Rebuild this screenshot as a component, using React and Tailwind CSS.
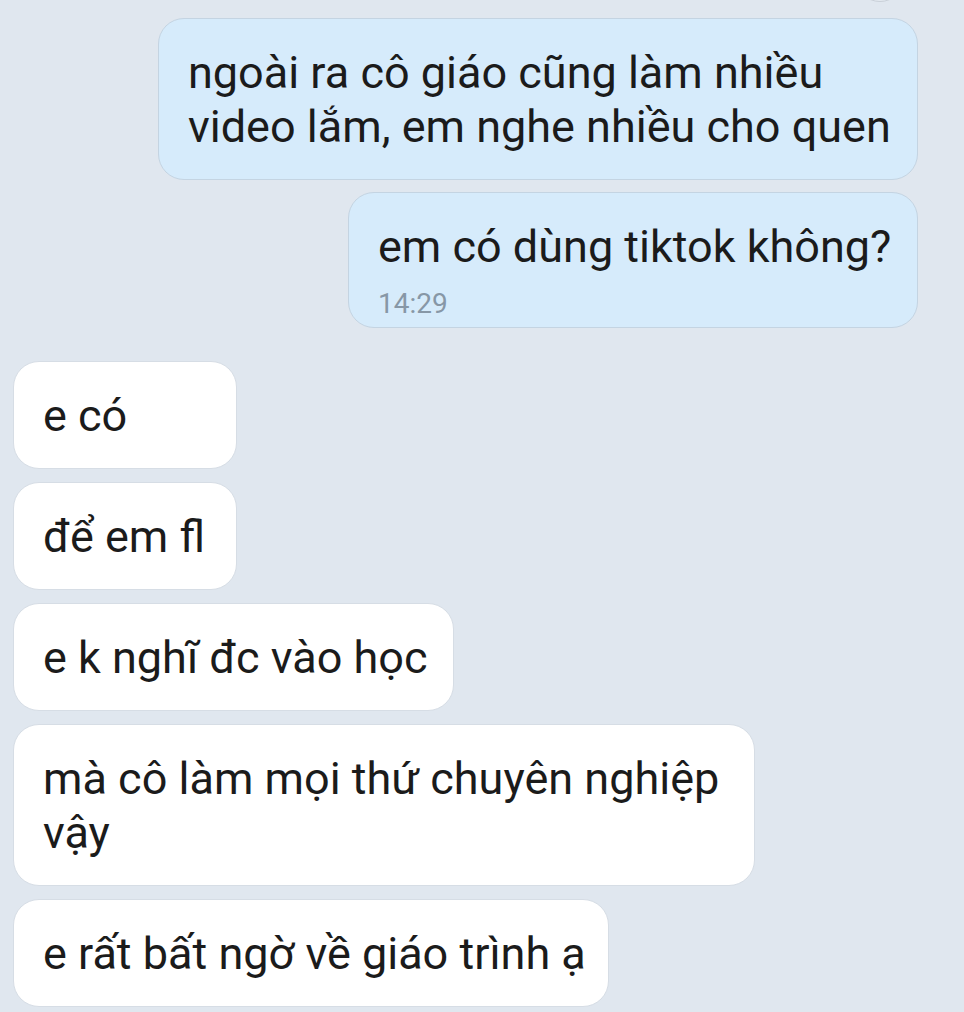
import React from "react";

const messages = [
  { side: "right", width: "w-[760px]", lines: ["ngoài ra cô giáo cũng làm nhiều", "video lắm, em nghe nhiều cho quen"] },
  { side: "right", width: "w-[570px]", lines: ["em có dùng tiktok không?"], time: "14:29" },
  { side: "left", width: "w-[224px]", lines: ["e có"] },
  { side: "left", width: "w-[224px]", lines: ["để em fl"] },
  { side: "left", width: "w-[441px]", lines: ["e k nghĩ đc vào học"] },
  { side: "left", width: "w-[742px]", lines: ["mà cô làm mọi thứ chuyên nghiệp", "vậy"] },
  { side: "left", width: "w-[596px]", lines: ["e rất bất ngờ về giáo trình ạ"] },
];

const Bubble = ({ msg }) => {
  const mine = msg.side === "right";
  return (
    <div
      className={`${msg.width} rounded-[26px] border px-[29px] pt-[27px] ${
        msg.time ? "pb-[8px]" : "pb-[25px]"
      } ${mine ? "bg-[#d6ebfb] border-[#c4d4e2]" : "bg-white border-[#d6dde5]"}`}
    >
      {msg.lines.map((line, i) => (
        <div key={i} className="whitespace-nowrap text-[45px] leading-[54px] text-[#1b1b1b]">
          {line}
        </div>
      ))}
      {msg.time && (
        <div className="mt-[15px] text-[28px] leading-[30px] text-[#8797a6]">{msg.time}</div>
      )}
    </div>
  );
};

export default function App() {
  return (
    <div
      className="relative min-h-[1012px] w-full overflow-hidden bg-[#e0e7ef]"
      style={{ fontFamily: "Roboto, 'Noto Sans', sans-serif" }}
    >
      {/* edge of an avatar/button cut off at the top */}
      <div className="absolute left-[855px] top-[-48px] h-[50px] w-[50px] rounded-full border border-[#c9d0d8] bg-[#e4eaf1]" />

      <div className="flex flex-col pt-[18px] pl-[13px] pr-[46px]">
        <div className="flex flex-col items-end gap-[12px]">
          {messages.slice(0, 2).map((m, i) => (
            <Bubble key={i} msg={m} />
          ))}
        </div>
        <div className="mt-[33px] flex flex-col items-start gap-[13px]">
          {messages.slice(2).map((m, i) => (
            <Bubble key={i} msg={m} />
          ))}
        </div>
      </div>
    </div>
  );
}
